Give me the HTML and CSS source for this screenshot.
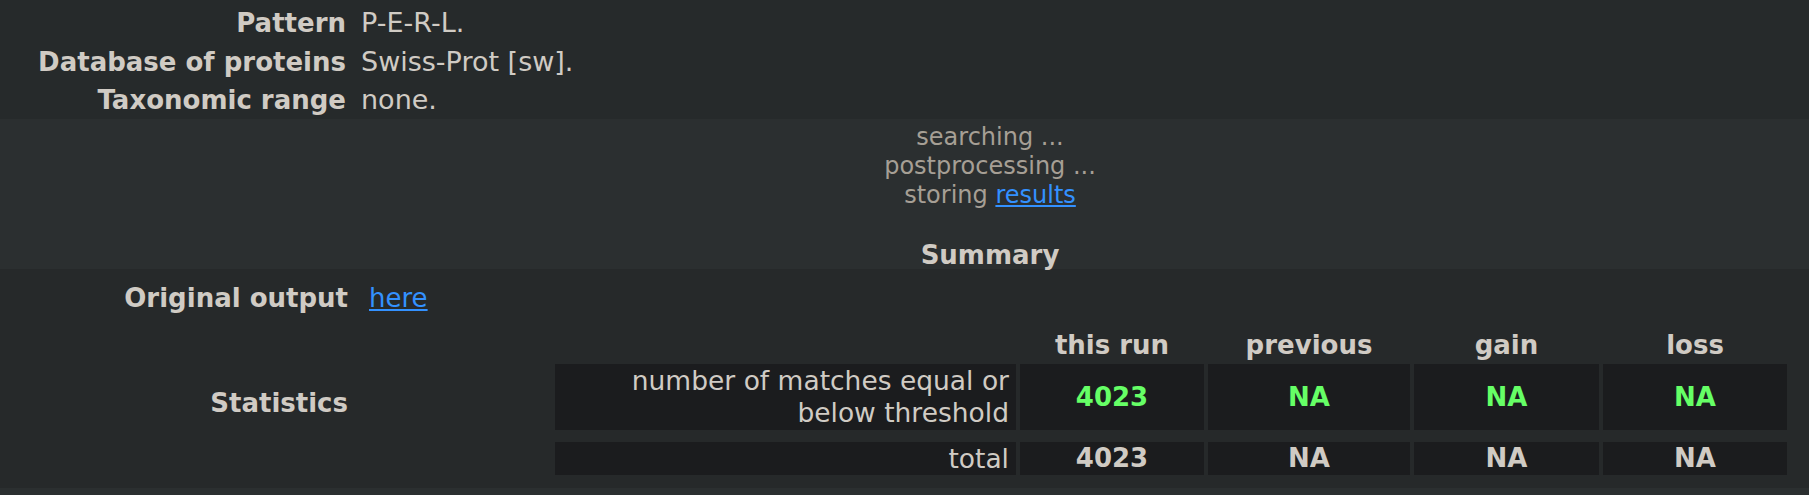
FILE: index.html
```html
<!DOCTYPE html>
<html>
<head>
<meta charset="utf-8">
<link rel="stylesheet" href="styles.css">
</head>
<body>
<div class="params">
  <div class="plabel">Pattern</div><div class="pval">P-E-R-L.</div>
  <div class="plabel">Database of proteins</div><div class="pval">Swiss-Prot [sw].</div>
  <div class="plabel">Taxonomic range</div><div class="pval">none.</div>
</div>
<div class="progress">
  <div class="step">searching ...</div>
  <div class="step">postprocessing ...</div>
  <div class="step">storing <a href="#" class="link">results</a></div>
  <div class="heading">Summary</div>
</div>
<div class="summary">
  <div class="srow">
    <div class="slabel">Original output</div>
    <div class="sval"><a href="#" class="link">here</a></div>
  </div>
  <div class="srow stats">
    <div class="slabel stat-label">Statistics</div>
    <div class="stable-wrap">
      <div class="stable">
        <div class="th empty"></div>
        <div class="th">this run</div>
        <div class="th">previous</div>
        <div class="th">gain</div>
        <div class="th">loss</div>

        <div class="td desc">number of matches equal or<br>below threshold</div>
        <div class="td num green">4023</div>
        <div class="td num green">NA</div>
        <div class="td num green">NA</div>
        <div class="td num green">NA</div>

        <div class="td desc r2">total</div>
        <div class="td num r2">4023</div>
        <div class="td num r2">NA</div>
        <div class="td num r2">NA</div>
        <div class="td num r2">NA</div>
      </div>
    </div>
  </div>
</div>
</body>
</html>
```

FILE: styles.css
```css
html, body {
  margin: 0;
  padding: 0;
}
body {
  background: #2b2f30;
  color: #d0cbc4;
  font-family: "DejaVu Sans", Verdana, sans-serif;
  font-size: 26px;
  height: 495px;
  overflow: hidden;
}
.link {
  color: #3391ff;
  text-decoration: underline;
}
.params {
  background: #262a2b;
  display: grid;
  grid-template-columns: 346px 1fr;
  grid-auto-rows: 38.5px;
  column-gap: 15px;
  padding-top: 4px;
  height: 119px;
  box-sizing: border-box;
}
.plabel {
  font-weight: bold;
  text-align: right;
  line-height: 38px;
}
.pval {
  line-height: 38px;
  font-size: 27px;
}
.progress {
  text-align: center;
  padding: 4px 0 1px 171px;
  height: 150px;
  box-sizing: border-box;
}
.step {
  font-size: 24px;
  line-height: 29px;
  color: #a69f95;
}
.heading {
  font-weight: bold;
  line-height: 30px;
  margin-top: 30px;
}
.summary {
  background: #26292a;
  padding: 14px 22px 12px 0;
  height: 219px;
  box-sizing: border-box;
}
.srow {
  display: flex;
  align-items: center;
}
.slabel {
  width: 348px;
  flex: none;
  text-align: right;
  font-weight: bold;
  line-height: 31px;
}
.stat-label {
  padding-top: 3px;
}
.sval {
  margin-left: 21px;
  line-height: 31px;
}
.stats {
  margin-top: 15px;
}
.stable-wrap {
  flex: 1;
  display: flex;
  justify-content: flex-end;
}
.stable {
  display: grid;
  grid-template-columns: 461px 184px 202px 185px 184px;
  column-gap: 4px;
  row-gap: 4px;
}
.th {
  font-weight: bold;
  text-align: center;
  line-height: 30px;
  padding-top: 1px;
}
.td {
  background: #1b1c1e;
  line-height: 32px;
  padding: 1px 0;
}
.desc {
  text-align: right;
  padding-right: 7px;
  font-size: 26.5px;
}
.num {
  font-weight: bold;
  text-align: center;
  display: flex;
  align-items: center;
  justify-content: center;
}
.green {
  color: #66ff66;
}
.r2 {
  margin-top: 8px;
  line-height: 31px;
}
```
